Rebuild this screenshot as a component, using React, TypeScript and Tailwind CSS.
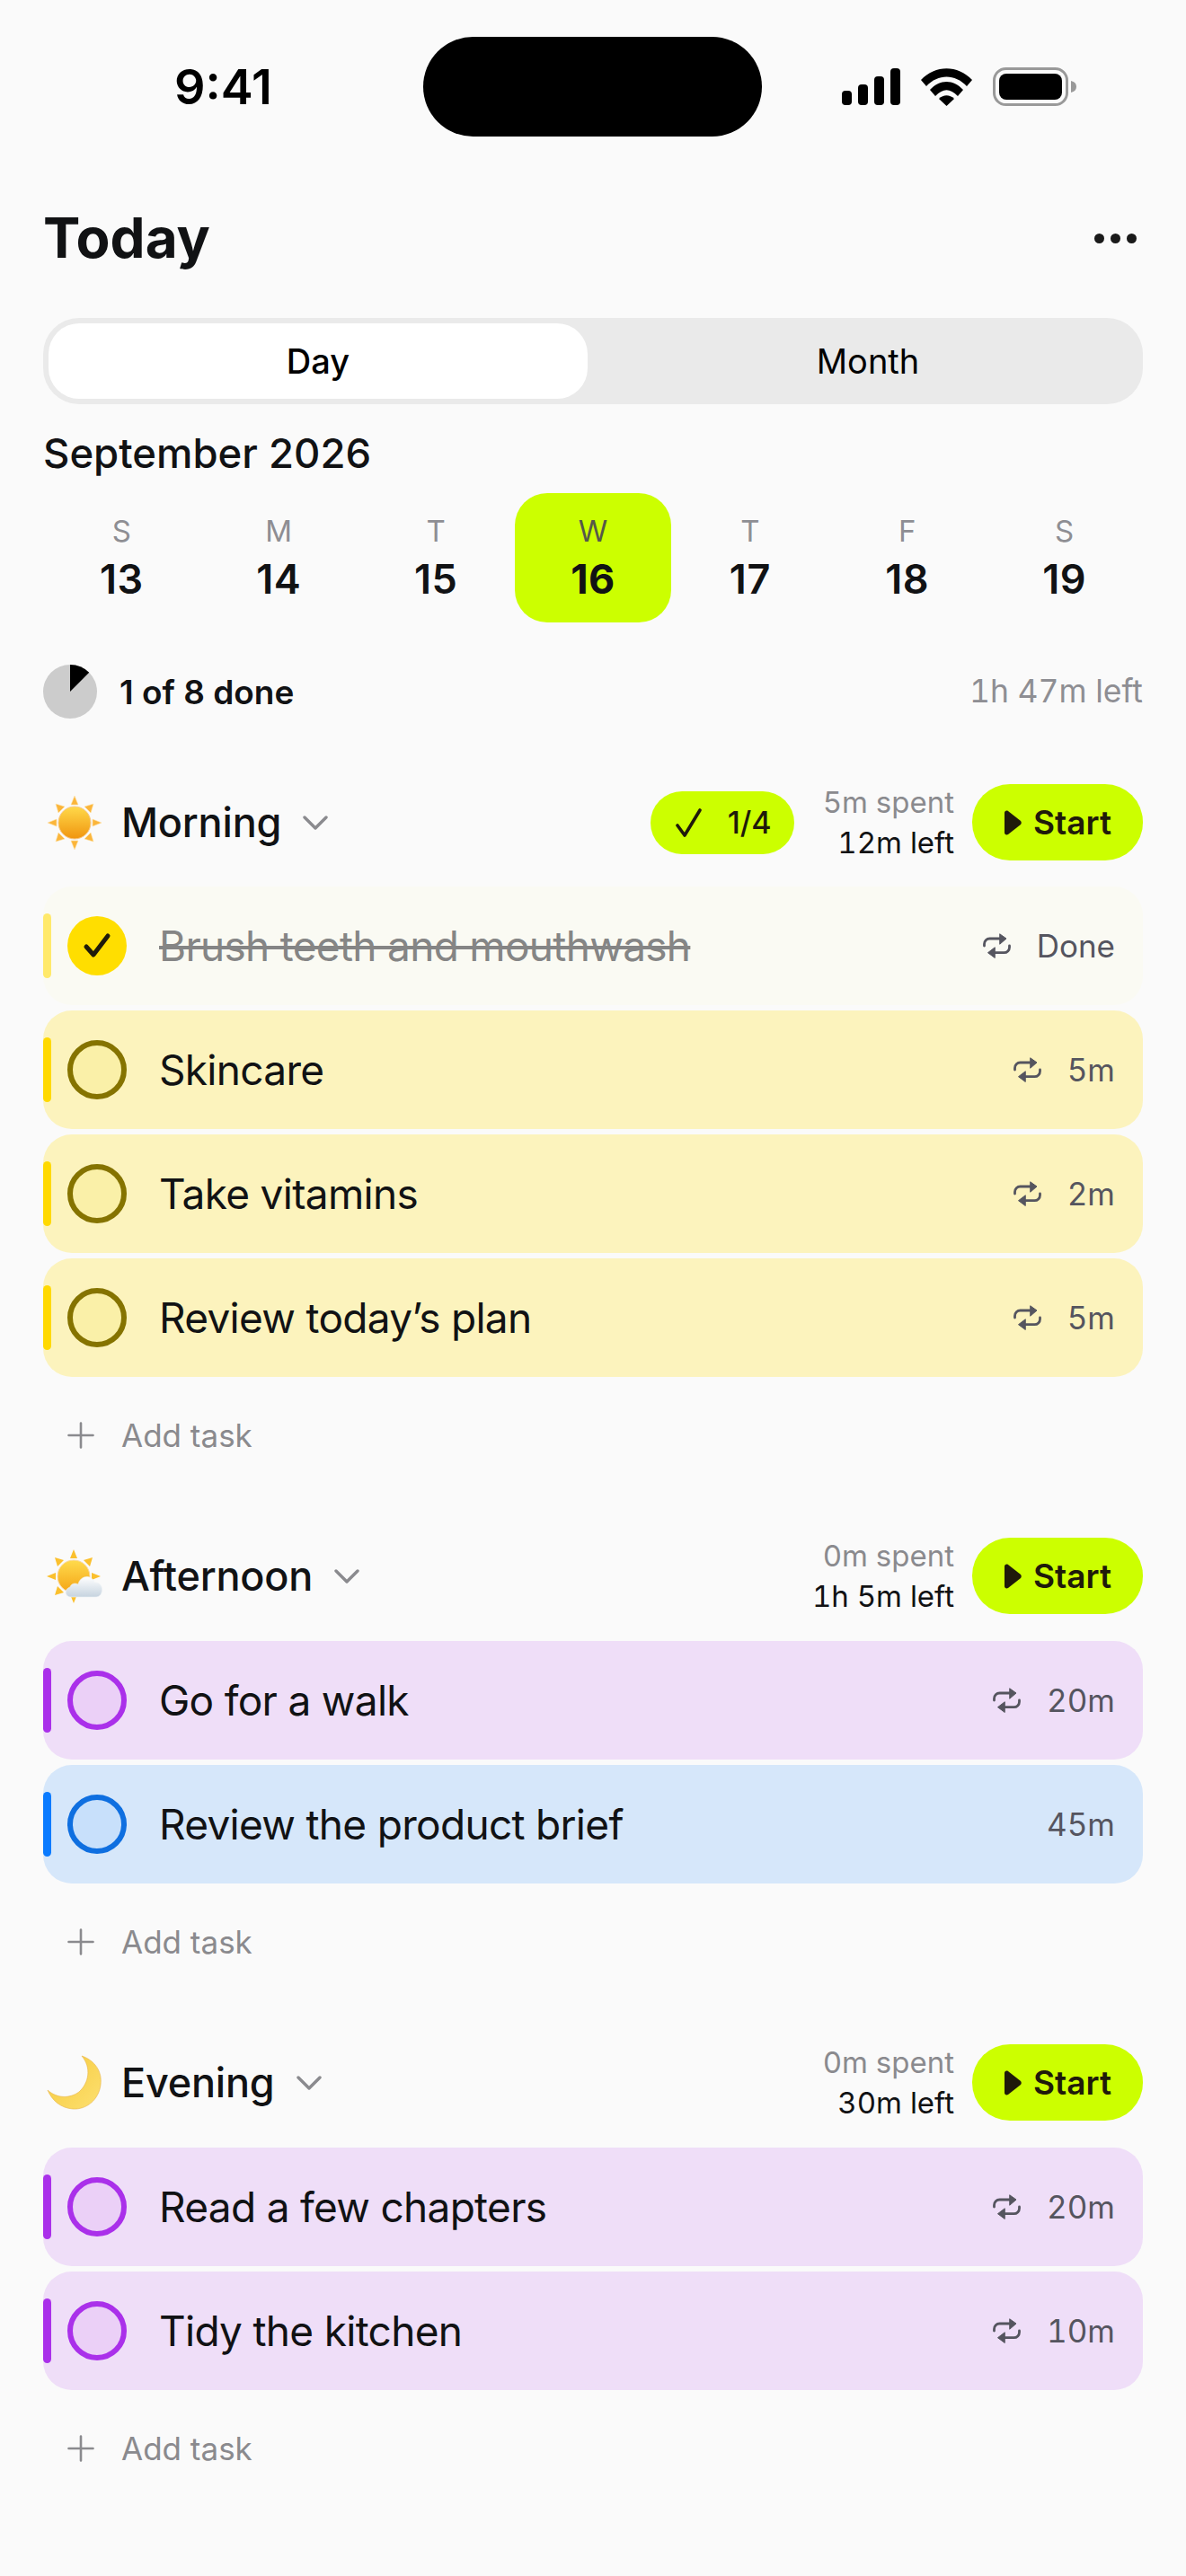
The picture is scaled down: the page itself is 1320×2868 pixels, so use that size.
import React from 'react';

const LIME = 'bg-[#ccff00]';

const SignalIcon = () => (
  <svg width="65" height="41" viewBox="0 0 65 41" fill="#000">
    <rect x="0" y="25" width="11" height="16" rx="4" />
    <rect x="18" y="18" width="11" height="23" rx="4" />
    <rect x="36" y="9" width="11" height="32" rx="4" />
    <rect x="54" y="0" width="11" height="41" rx="4" />
  </svg>
);

const WifiIcon = () => (
  <svg width="57" height="42" viewBox="0 0 57 42" fill="#000">
    <path d="M0 13 C16 -4 41 -4 57 13 L51 20 C38 6 19 6 6 20 Z" />
    <path d="M10 24 C21 12 36 12 47 24 L41 31 C32 22 25 22 16 31 Z" />
    <path d="M20 34 C25 29 32 29 37 34 L28.5 42 Z" />
  </svg>
);

const BatteryIcon = () => (
  <svg width="93" height="43" viewBox="0 0 93 43">
    <rect x="1.5" y="1.5" width="81" height="40" rx="13" fill="none" stroke="#999" strokeWidth="3" />
    <rect x="7" y="7" width="70" height="29" rx="8" fill="#000" />
    <path d="M87 15 C91 16 93 18 93 21.5 C93 25 91 27 87 28 Z" fill="#999" />
  </svg>
);

const RepeatIcon = () => (
  <svg width="31" height="28" viewBox="0 0 31 28" fill="none" stroke="#55555f" strokeWidth="2.8" strokeLinecap="round" strokeLinejoin="round">
    <path d="M1.5 14 V12 A6 6 0 0 1 7.5 6 H20" />
    <path d="M19 1 L26 6 L19 12 Z" fill="#55555f" strokeWidth="1" />
    <path d="M29.5 14 V15.7 A6 6 0 0 1 23.5 21.7 H12" />
    <path d="M13 16 L5.5 21.7 L13 27.3 Z" fill="#55555f" strokeWidth="1" />
  </svg>
);

const Chevron = () => (
  <svg width="28" height="16" viewBox="0 0 28 16" fill="none" stroke="#8a8a8e" strokeWidth="3.4" strokeLinecap="round" strokeLinejoin="round">
    <path d="M2 2 L14 14 L26 2" />
  </svg>
);

const Plus = () => (
  <svg width="30" height="30" viewBox="0 0 30 30" stroke="#8a8a8e" strokeWidth="2.6" strokeLinecap="round">
    <path d="M15 1.5 V28.5 M1.5 15 H28.5" />
  </svg>
);

const SunIcon = () => (
  <svg width="60" height="60" viewBox="0 0 60 60">
    <defs>
      <linearGradient id="sunfill" x1="0" y1="0" x2="0" y2="1">
        <stop offset="0" stopColor="#ffd94a" />
        <stop offset="1" stopColor="#f0950f" />
      </linearGradient>
    </defs>
    <g fill="#fbb53a" stroke="#fde3a8" strokeWidth="0.6">
      <path d="M30 0 L34 10 H26 Z" />
      <path d="M30 60 L34 50 H26 Z" />
      <path d="M0 30 L10 26 V34 Z" />
      <path d="M60 30 L50 26 V34 Z" />
      <path d="M9 9 L19 12 L12 19 Z" />
      <path d="M51 9 L48 19 L41 12 Z" />
      <path d="M9 51 L12 41 L19 48 Z" />
      <path d="M51 51 L41 48 L48 41 Z" />
    </g>
    <circle cx="30" cy="30" r="18" fill="url(#sunfill)" stroke="#f7c98a" strokeWidth="1" />
  </svg>
);

const SunCloudIcon = () => (
  <svg width="62" height="60" viewBox="0 0 62 60">
    <defs>
      <linearGradient id="sunfill2" x1="0" y1="0" x2="0" y2="1">
        <stop offset="0" stopColor="#ffdb4d" />
        <stop offset="1" stopColor="#f4a516" />
      </linearGradient>
      <linearGradient id="cloudfill" x1="0" y1="0" x2="0" y2="1">
        <stop offset="0" stopColor="#ffffff" />
        <stop offset="1" stopColor="#c6d3df" />
      </linearGradient>
    </defs>
    <g fill="#fbc02d">
      <path d="M30 0 L34 10 H26 Z" />
      <path d="M30 60 L34 50 H26 Z" />
      <path d="M0 30 L10 26 V34 Z" />
      <path d="M60 30 L50 26 V34 Z" />
      <path d="M9 9 L19 12 L12 19 Z" />
      <path d="M51 9 L48 19 L41 12 Z" />
      <path d="M9 51 L12 41 L19 48 Z" />
    </g>
    <circle cx="30" cy="30" r="18" fill="url(#sunfill2)" stroke="#fbd9a0" strokeWidth="1" />
    <path d="M27 53 C20 53 19 44 26 42 C27 38 32 37 35 39 C37 29 50 27 53 37 C60 36 63 43 61 48 C60 52 57 53 54 53 Z" fill="url(#cloudfill)" stroke="#eef2f5" strokeWidth="0.6" />
  </svg>
);

const MoonIcon = () => (
  <svg width="62" height="62" viewBox="0 0 62 62">
    <defs>
      <linearGradient id="moonfill" x1="0" y1="0" x2="1" y2="1">
        <stop offset="0" stopColor="#f5c93a" />
        <stop offset="1" stopColor="#fde071" />
      </linearGradient>
    </defs>
    <path d="M39 1 C54 6 62 19 60 33 C58 50 44 61 29 60 C16 59 6 51 1 39 C11 48 25 49 36 41 C47 31 50 14 39 1 Z" fill="url(#moonfill)" stroke="#e8b44a" strokeWidth="0.6" />
  </svg>
);

type Tone = 'done' | 'yellow' | 'purple' | 'blue';

const TONES: Record<Tone, { row: string; bar: string; circle: string }> = {
  done: { row: 'bg-[#fafaf3]', bar: 'bg-[#ffe96b]', circle: 'bg-[#ffde00]' },
  yellow: { row: 'bg-[#fcf3bd]', bar: 'bg-[#ffd900]', circle: 'border-[6px] border-[#857300] bg-[#faf0a8]' },
  purple: { row: 'bg-[#efdef8]', bar: 'bg-[#aa30ea]', circle: 'border-[6px] border-[#aa30ea] bg-[#ebd0f7]' },
  blue: { row: 'bg-[#d6e7fa]', bar: 'bg-[#0a7bff]', circle: 'border-[6px] border-[#0f6fe0] bg-[#c8e0fb]' },
};

const TaskRow = ({ tone, title, time, repeat = true }: { tone: Tone; title: string; time: string; repeat?: boolean }) => {
  const t = TONES[tone];
  const done = tone === 'done';
  return (
    <div className={`h-[132px] rounded-[32px] flex items-center pr-[31px] ${t.row}`}>
      <div className={`w-[9px] h-[72px] rounded-full ${t.bar}`} />
      <div className={`ml-[18px] w-[66px] h-[66px] rounded-full flex items-center justify-center ${t.circle}`}>
        {done && (
          <svg width="32" height="30" viewBox="0 0 32 30" fill="none" stroke="#1f1a0a" strokeWidth="5" strokeLinecap="round" strokeLinejoin="round">
            <path d="M4 16 L12 25 L28 4" />
          </svg>
        )}
      </div>
      <div className={`ml-[36px] flex-1 text-[46px] font-[430] leading-[56px] tracking-[-0.7px] ${done ? 'text-[#858585] line-through' : 'text-[#111214]'}`}>{title}</div>
      {repeat && <RepeatIcon />}
      <div className="ml-[29px] text-[35px] leading-[44px] tabular-nums text-[#55555f]">{time}</div>
    </div>
  );
};

const AddTask = () => (
  <div className="mt-[25px] h-[80px] pl-[27px] flex items-center">
    <Plus />
    <span className="ml-[30px] text-[35px] text-[#8a8a8e]">Add task</span>
  </div>
);

const SectionHeader = ({ icon, name, spent, left, badge }: { icon: React.ReactNode; name: string; spent: string; left: string; badge?: boolean }) => (
  <div className="h-[85px] flex items-center">
    <div className="w-[62px] ml-[4px] flex items-center justify-center">{icon}</div>
    <span className="ml-[21px] text-[45px] font-medium tracking-[-0.2px] text-[#111214] leading-[56px]">{name}</span>
    <span className="ml-[24px]"><Chevron /></span>
    <div className="flex-1" />
    {badge && (
      <div className={`mr-[32px] w-[160px] h-[70px] rounded-[35px] flex items-center pl-[27px] ${LIME}`}>
        <svg width="32" height="36" viewBox="0 0 32 36" fill="none" stroke="#1f1a0a" strokeWidth="3.6" strokeLinecap="round" strokeLinejoin="round">
          <path d="M3 21 L11 32 L28 4" />
        </svg>
        <span className="ml-[27px] text-[34px] font-medium text-[#1f1a0a]">1/4</span>
      </div>
    )}
    <div className="flex flex-col items-end tabular-nums">
      <span className="text-[33px] leading-[45px] text-[#8a8a8e]">{spent}</span>
      <span className="text-[33px] leading-[45px] text-[#111214]">{left}</span>
    </div>
    <div className={`ml-[20px] w-[190px] h-[85px] rounded-[42px] flex items-center justify-center ${LIME}`}>
      <svg width="20" height="28" viewBox="0 0 20 28" fill="#1f1a0a">
        <path d="M1 3 C1 1 3 0 5 1 L19 12 C20 13 20 15 19 16 L5 27 C3 28 1 27 1 25 Z" />
      </svg>
      <span className="ml-[13px] text-[37px] font-semibold text-[#1f1a0a]">Start</span>
    </div>
  </div>
);

const DAYS = [
  ['S', '13'],
  ['M', '14'],
  ['T', '15'],
  ['W', '16'],
  ['T', '17'],
  ['F', '18'],
  ['S', '19'],
];

export default function App() {
  return (
    <div className="w-[1320px] h-[2868px] bg-[#fafafa] font-[Inter,sans-serif] overflow-hidden">
      {/* status bar */}
      <div className="pt-[41px] h-[152px] flex items-start">
        <div className="w-[471px] h-[111px] flex items-center justify-center pl-[24px]">
          <span className="text-[54px] font-semibold text-black leading-none ml-[2px]">9:41</span>
        </div>
        <div className="w-[377px] h-[111px] rounded-[56px] bg-black" />
        <div className="ml-[89px] h-[111px] flex items-center">
          <SignalIcon />
          <span className="ml-[23px]"><WifiIcon /></span>
          <span className="ml-[23px]"><BatteryIcon /></span>
        </div>
      </div>

      <div className="px-[48px]">
        {/* title */}
        <div className="mt-[77px] h-[72px] flex items-center justify-between">
          <h1 className="text-[62px] font-bold text-[#111214] leading-[72px]">Today</h1>
          <div className="flex gap-[7px] pr-[7px]">
            <span className="w-[11px] h-[11px] rounded-full bg-[#1a1a1a]" />
            <span className="w-[11px] h-[11px] rounded-full bg-[#1a1a1a]" />
            <span className="w-[11px] h-[11px] rounded-full bg-[#1a1a1a]" />
          </div>
        </div>

        {/* day / month */}
        <div className="mt-[53px] h-[96px] rounded-[40px] bg-[#eaeaea] p-[6px] flex">
          <div className="w-[600px] rounded-[34px] bg-white flex items-center justify-center text-[38px] font-medium text-black">Day</div>
          <div className="flex-1 flex items-center justify-center pl-[12px] text-[38px] text-black">Month</div>
        </div>

        {/* month label */}
        <div className="mt-[30px] h-[50px] text-[45.5px] leading-[50px] font-medium text-[#111214]">September 2026</div>

        {/* week */}
        <div className="mt-[19px] grid grid-cols-7 h-[144px]">
          {DAYS.map(([d, n], i) => (
            <div key={i} className={`flex flex-col items-center pt-[23px] rounded-[36px] ${i === 3 ? LIME : ''}`}>
              <span className={`text-[33px] leading-[38px] ${i === 3 ? 'text-[#55584a]' : 'text-[#8e8e93]'}`}>{d}</span>
              <span className={`mt-[9px] text-[45px] leading-[52px] tracking-[0.5px] text-[#111214] ${i === 3 ? 'font-bold' : 'font-semibold'}`}>{n}</span>
            </div>
          ))}
        </div>

        {/* progress */}
        <div className="mt-[47px] h-[60px] flex items-center">
          <svg width="60" height="60" viewBox="0 0 60 60">
            <circle cx="30" cy="30" r="30" fill="#cccccc" />
            <path d="M30 30 L30 0 A30 30 0 0 1 51.2 8.8 Z" fill="#000" />
          </svg>
          <span className="ml-[25px] mt-[2px] text-[37px] font-semibold text-[#111214]">1 of 8 done</span>
          <span className="ml-auto text-[35.5px] tabular-nums text-[#8e8e93]">1h 47m left</span>
        </div>

        {/* morning */}
        <div className="mt-[73px]">
          <SectionHeader icon={<SunIcon />} name="Morning" spent="5m spent" left="12m left" badge />
          <div className="mt-[29px] flex flex-col gap-[6px]">
            <TaskRow tone="done" title="Brush teeth and mouthwash" time="Done" />
            <TaskRow tone="yellow" title="Skincare" time="5m" />
            <TaskRow tone="yellow" title="Take vitamins" time="2m" />
            <TaskRow tone="yellow" title="Review today’s plan" time="5m" />
          </div>
          <AddTask />
        </div>

        {/* afternoon */}
        <div className="mt-[74px]">
          <SectionHeader icon={<SunCloudIcon />} name="Afternoon" spent="0m spent" left="1h 5m left" />
          <div className="mt-[30px] flex flex-col gap-[6px]">
            <TaskRow tone="purple" title="Go for a walk" time="20m" />
            <TaskRow tone="blue" title="Review the product brief" time="45m" repeat={false} />
          </div>
          <AddTask />
        </div>

        {/* evening */}
        <div className="mt-[74px]">
          <SectionHeader icon={<MoonIcon />} name="Evening" spent="0m spent" left="30m left" />
          <div className="mt-[30px] flex flex-col gap-[6px]">
            <TaskRow tone="purple" title="Read a few chapters" time="20m" />
            <TaskRow tone="purple" title="Tidy the kitchen" time="10m" />
          </div>
          <AddTask />
        </div>
      </div>
    </div>
  );
}
